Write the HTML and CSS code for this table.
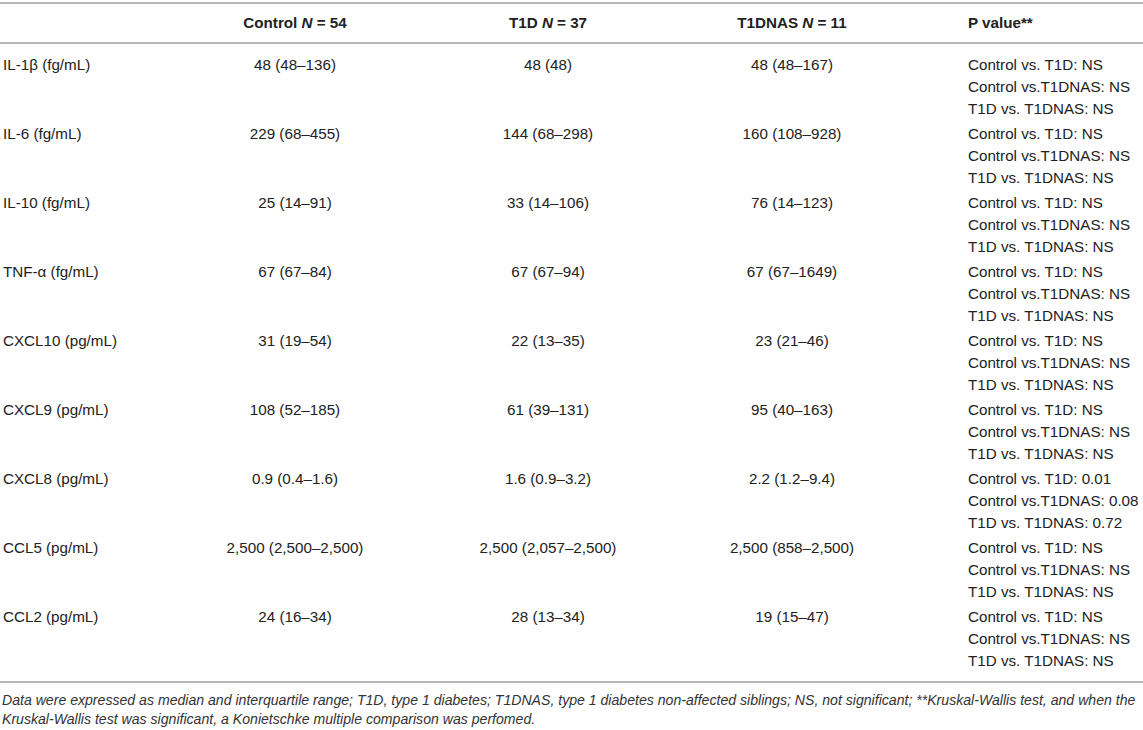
FILE: index.html
```html
<!DOCTYPE html>
<html lang="en">
<head>
    <meta charset="UTF-8">
    <meta name="viewport" content="width=device-width, initial-scale=1.0">
    <title>Cytokines and chemokines</title>
    <link rel="stylesheet" href="styles.css">
</head>
<body>

    <table class="data-table">
        <colgroup>
            <col class="col-label">
            <col class="col-control">
            <col class="col-t1d">
            <col class="col-t1dnas">
            <col class="col-p">
        </colgroup>
        <thead>
            <tr>
                <th></th>
                <th>Control <i>N</i> = 54</th>
                <th>T1D <i>N</i> = 37</th>
                <th>T1DNAS <i>N</i> = 11</th>
                <th class="p-cell">P value**</th>
            </tr>
        </thead>
        <tbody>
            <tr>
                <td class="label">IL-1β (fg/mL)</td>
                <td>48 (48–136)</td>
                <td>48 (48)</td>
                <td>48 (48–167)</td>
                <td class="p-cell">Control vs. T1D: NS<br>Control vs.T1DNAS: NS<br>T1D vs. T1DNAS: NS</td>
            </tr>
            <tr>
                <td class="label">IL-6 (fg/mL)</td>
                <td>229 (68–455)</td>
                <td>144 (68–298)</td>
                <td>160 (108–928)</td>
                <td class="p-cell">Control vs. T1D: NS<br>Control vs.T1DNAS: NS<br>T1D vs. T1DNAS: NS</td>
            </tr>
            <tr>
                <td class="label">IL-10 (fg/mL)</td>
                <td>25 (14–91)</td>
                <td>33 (14–106)</td>
                <td>76 (14–123)</td>
                <td class="p-cell">Control vs. T1D: NS<br>Control vs.T1DNAS: NS<br>T1D vs. T1DNAS: NS</td>
            </tr>
            <tr>
                <td class="label">TNF-α (fg/mL)</td>
                <td>67 (67–84)</td>
                <td>67 (67–94)</td>
                <td>67 (67–1649)</td>
                <td class="p-cell">Control vs. T1D: NS<br>Control vs.T1DNAS: NS<br>T1D vs. T1DNAS: NS</td>
            </tr>
            <tr>
                <td class="label">CXCL10 (pg/mL)</td>
                <td>31 (19–54)</td>
                <td>22 (13–35)</td>
                <td>23 (21–46)</td>
                <td class="p-cell">Control vs. T1D: NS<br>Control vs.T1DNAS: NS<br>T1D vs. T1DNAS: NS</td>
            </tr>
            <tr>
                <td class="label">CXCL9 (pg/mL)</td>
                <td>108 (52–185)</td>
                <td>61 (39–131)</td>
                <td>95 (40–163)</td>
                <td class="p-cell">Control vs. T1D: NS<br>Control vs.T1DNAS: NS<br>T1D vs. T1DNAS: NS</td>
            </tr>
            <tr>
                <td class="label">CXCL8 (pg/mL)</td>
                <td>0.9 (0.4–1.6)</td>
                <td>1.6 (0.9–3.2)</td>
                <td>2.2 (1.2–9.4)</td>
                <td class="p-cell">Control vs. T1D: 0.01<br>Control vs.T1DNAS: 0.08<br>T1D vs. T1DNAS: 0.72</td>
            </tr>
            <tr>
                <td class="label">CCL5 (pg/mL)</td>
                <td>2,500 (2,500–2,500)</td>
                <td>2,500 (2,057–2,500)</td>
                <td>2,500 (858–2,500)</td>
                <td class="p-cell">Control vs. T1D: NS<br>Control vs.T1DNAS: NS<br>T1D vs. T1DNAS: NS</td>
            </tr>
            <tr>
                <td class="label">CCL2 (pg/mL)</td>
                <td>24 (16–34)</td>
                <td>28 (13–34)</td>
                <td>19 (15–47)</td>
                <td class="p-cell">Control vs. T1D: NS<br>Control vs.T1DNAS: NS<br>T1D vs. T1DNAS: NS</td>
            </tr>
        </tbody>
    </table>

    <p class="footnote">Data were expressed as median and interquartile range; T1D, type 1 diabetes; T1DNAS, type 1 diabetes non-affected siblings; NS, not significant; **Kruskal-Wallis test, and when the Kruskal-Wallis test was significant, a Konietschke multiple comparison was perfomed.</p>

</body>
</html>
```

FILE: styles.css
```css
body {
    margin: 0;
    font-family: "Liberation Sans", Arial, sans-serif;
    font-size: 15.2px;
    color: #222;
    background: #fff;
}

.data-table {
    width: 100%;
    margin-top: 2px;
    border-collapse: collapse;
    table-layout: fixed;
    border-top: 2px solid #b8b8b8;
    border-bottom: 2px solid #b8b8b8;
}

.col-label { width: 170px; }
.col-control { width: 250px; }
.col-t1d { width: 256px; }
.col-t1dnas { width: 232px; }

th, td {
    padding: 2px 4px 1px;
    line-height: 22px;
    text-align: center;
    vertical-align: top;
    white-space: nowrap;
}

thead th {
    padding-top: 8px;
    padding-bottom: 8px;
    font-weight: bold;
    border-bottom: 2px solid #b8b8b8;
}

tbody tr:first-child td {
    padding-top: 10px;
}

tbody tr:last-child td {
    padding-bottom: 9px;
}

td.label {
    text-align: left;
    padding-left: 3px;
}

.p-cell {
    text-align: left;
    padding-left: 60px;
}

.footnote {
    margin: 8px 0 0;
    padding-left: 2px;
    font-size: 14.1px;
    font-style: italic;
    line-height: 19px;
    color: #333;
}
```
